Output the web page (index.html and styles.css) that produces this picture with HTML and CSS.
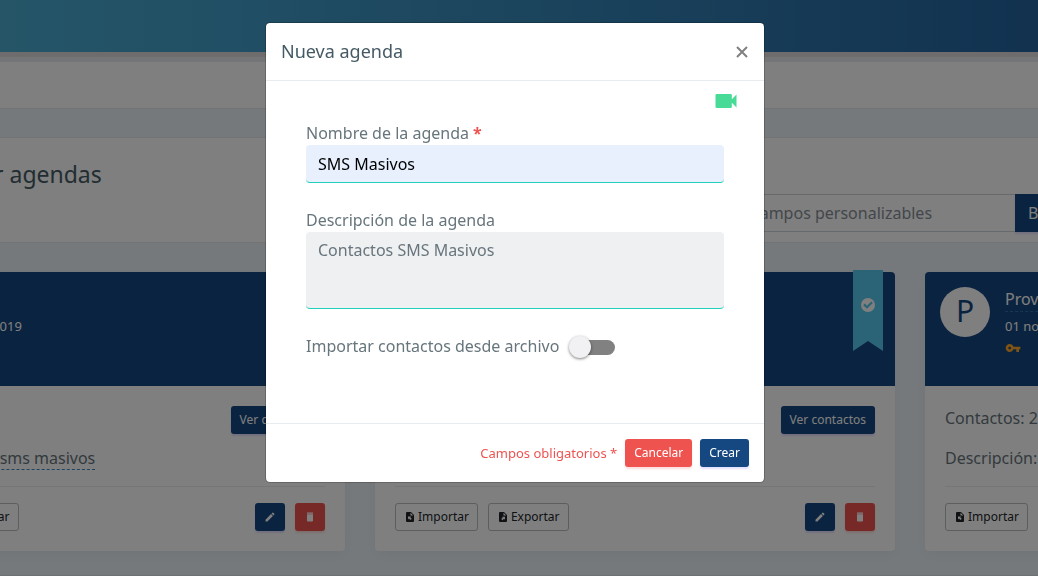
FILE: index.html
```html
<!DOCTYPE html>
<html lang="es">
<head>
<meta charset="utf-8">
<title>Nueva agenda</title>
<link rel="stylesheet" href="styles.css">
</head>
<body>
<svg class="sprite" aria-hidden="true">
  <symbol id="i-video" viewBox="0 0 24 24"><path d="M17 10.500V7a1 1 0 0 0-1-1H4a1 1 0 0 0-1 1v10a1 1 0 0 0 1 1h12a1 1 0 0 0 1-1v-3.500l4 4v-11z"/></symbol>
  <symbol id="i-key" viewBox="0 0 24 24"><path d="M12.650 10C11.830 7.670 9.610 6 7 6c-3.310 0-6 2.690-6 6s2.690 6 6 6c2.610 0 4.830-1.670 5.650-4H17v4h4v-4h2v-4zM7 14c-1.100 0-2-.9-2-2s.9-2 2-2 2 .9 2 2-.9 2-2 2z"/></symbol>
  <symbol id="i-check" viewBox="2 2 20 20"><path fill-rule="evenodd" d="M12 2a10 10 0 1 0 0 20 10 10 0 0 0 0-20zM10.500 17.500 5.200 12.200l2.200-2.200 3.100 3.100 6.200-6.200 2.200 2.200z"/></symbol>
  <symbol id="i-pencil" viewBox="0 0 24 24"><path d="M20.710 7.040c.39-.39.39-1.040 0-1.410l-2.340-2.340c-.37-.39-1.020-.39-1.410 0l-1.840 1.830 3.750 3.750M3 17.250V21h3.750L17.810 9.930l-3.750-3.750z"/></symbol>
  <symbol id="i-trash" viewBox="0 0 24 24"><path d="M18 3H6v2.500h12M6 19a2 2 0 0 0 2 2h8a2 2 0 0 0 2-2V6.500H6z"/></symbol>
  <symbol id="i-import" viewBox="0 0 24 24"><path fill-rule="evenodd" d="M14 2H6a2 2 0 0 0-2 2v16a2 2 0 0 0 2 2h12a2 2 0 0 0 2-2V8zM13 9V3.500L18.500 9zM8 11v6l2-2 3 3 2.500-2.500-3-3L14.500 11z"/></symbol>
  <symbol id="i-export" viewBox="0 0 24 24"><path fill-rule="evenodd" d="M14 2H6a2 2 0 0 0-2 2v16a2 2 0 0 0 2 2h12a2 2 0 0 0 2-2V8zM13 9V3.500L18.500 9zM10 11.500h6v6l-2-2-3 3L8.500 16l3-3z"/></symbol>
</svg>

<div class="page">
  <header class="topbar"></header>
  <nav class="breadcrumb"></nav>

  <section class="toolbar">
    <h1 class="toolbar-title">r agendas</h1>
    <form class="search">
      <input class="search-input" type="search" placeholder="campos personalizables" aria-label="Buscar agendas">
      <button class="search-button" type="button">Buscar</button>
    </form>
  </section>

  <main class="cards">
    <article class="card">
      <div class="card-head">
        <div class="avatar">P</div>
        <div class="card-info">
          <a class="card-name" href="#">Prueba</a>
          <time class="card-date">01 noviembre 2019</time>
        </div>
      </div>
      <div class="card-body">
        <div class="card-row"><span>Contactos: 2</span><button class="btn btn-primary" type="button">Ver contactos</button></div>
        <p class="card-desc">Descripción: <a class="editable" href="#">Prueba sms masivos</a></p>
        <div class="card-actions">
          <button class="btn btn-outline" type="button"><svg class="icon-sm"><use href="#i-import"/></svg>Importar</button>
          <button class="btn btn-outline" type="button"><svg class="icon-sm"><use href="#i-export"/></svg>Exportar</button>
          <button class="btn btn-primary btn-icon push" type="button" aria-label="Editar"><svg class="icon-sm"><use href="#i-pencil"/></svg></button>
          <button class="btn btn-danger btn-icon" type="button" aria-label="Eliminar"><svg class="icon-sm"><use href="#i-trash"/></svg></button>
        </div>
      </div>
    </article>

    <article class="card">
      <div class="card-head">
        <div class="ribbon"><svg class="icon-check"><use href="#i-check"/></svg></div>
      </div>
      <div class="card-body">
        <div class="card-row"><span>Contactos: 2</span><button class="btn btn-primary" type="button">Ver contactos</button></div>
        <p class="card-desc">Descripción:</p>
        <div class="card-actions">
          <button class="btn btn-outline" type="button"><svg class="icon-sm"><use href="#i-import"/></svg>Importar</button>
          <button class="btn btn-outline" type="button"><svg class="icon-sm"><use href="#i-export"/></svg>Exportar</button>
          <button class="btn btn-primary btn-icon push" type="button" aria-label="Editar"><svg class="icon-sm"><use href="#i-pencil"/></svg></button>
          <button class="btn btn-danger btn-icon" type="button" aria-label="Eliminar"><svg class="icon-sm"><use href="#i-trash"/></svg></button>
        </div>
      </div>
    </article>

    <article class="card">
      <div class="card-head">
        <div class="avatar">P</div>
        <div class="card-info">
          <a class="card-name" href="#">Proveedores</a>
          <time class="card-date">01 noviembre 2019</time>
          <svg class="icon-key"><use href="#i-key"/></svg>
        </div>
      </div>
      <div class="card-body">
        <div class="card-row"><span>Contactos: 2</span></div>
        <p class="card-desc">Descripción:</p>
        <div class="card-actions">
          <button class="btn btn-outline" type="button"><svg class="icon-sm"><use href="#i-import"/></svg>Importar</button>
        </div>
      </div>
    </article>
  </main>
  <footer class="page-foot"></footer>
</div>

<div class="backdrop">
  <form class="modal" role="dialog" aria-modal="true" aria-labelledby="modal-title">
    <div class="modal-head">
      <h2 class="modal-title" id="modal-title">Nueva agenda</h2>
      <button class="close" type="button" aria-label="Cerrar"><svg class="icon-close" viewBox="0 0 12 12"><path d="M1 1l10 10M11 1L1 11"/></svg></button>
    </div>
    <div class="modal-body">
      <a class="video" href="#" aria-label="Ver video"><svg class="icon-video"><use href="#i-video"/></svg></a>
      <div class="fields">
        <div class="field">
          <label class="label" for="name">Nombre de la agenda <span class="required">*</span></label>
          <input class="control control-filled" id="name" type="text" value="SMS Masivos">
        </div>
        <div class="field">
          <label class="label" for="desc">Descripción de la agenda</label>
          <textarea class="control control-area" id="desc">Contactos SMS Masivos</textarea>
        </div>
        <div class="switch-row">
          <label class="label" for="import">Importar contactos desde archivo</label>
          <input class="switch" id="import" type="checkbox">
        </div>
      </div>
    </div>
    <div class="modal-foot">
      <span class="note">Campos obligatorios *</span>
      <button class="btn btn-danger" type="button">Cancelar</button>
      <button class="btn btn-primary" type="button">Crear</button>
    </div>
  </form>
</div>
</body>
</html>
```

FILE: styles.css
```css
* { box-sizing: border-box; }

body {
  margin: 0;
  font: 16px/24px "Noto Sans", "Open Sans", sans-serif;
  color: #67757c;
  background: #ebf3f8;
}

h1, h2, p { margin: 0; font-weight: 400; }
button, input, textarea { font: inherit; }
svg { display: block; fill: currentColor; }
.sprite { position: absolute; width: 0; height: 0; }

.page { height: 100vh; overflow: hidden; }

.topbar {
  height: 52px;
  background: linear-gradient(90deg, #4aabcf 0%, #43a0cb 20%, #2464a0 100%);
}

.breadcrumb {
  height: 57px;
  border-top: 5px solid #dcd8d8;
  border-bottom: 1px solid #e2e6e9;
  background: linear-gradient(#e6eaec 5px, #fff 5px);
}

.toolbar {
  display: flex;
  justify-content: space-between;
  height: 106px;
  margin: 28px 0 29px;
  border: solid #e2e6e9;
  border-width: 1px 0;
  background: #fff;
  overflow: hidden;
}
.toolbar-title {
  margin: 20px 0 0 -6px;
  font-size: 23px;
  line-height: 32px;
  color: #455a64;
}
.search { display: flex; margin: 56px -60px 0 0; height: 38px; }
.search-input {
  width: 276px;
  padding: 0 12px;
  border: 1px solid #ced4da;
  border-right: 0;
  background: #fff;
  outline: 0;
}
.search-input::placeholder { color: #868e96; opacity: 1; }
.search-button {
  width: 83px;
  padding: 0 13px;
  border: 0;
  background: #154780;
  color: #fff;
  text-align: left;
  box-shadow: 0 2px 2px rgba(116, 96, 238, .2);
}

.cards {
  display: grid;
  grid-template-columns: repeat(3, 520px);
  gap: 30px;
  margin-left: -175px;
}
.card {
  border-radius: 4px;
  background: #fff;
  box-shadow: 0 4px 12px rgba(120, 140, 160, .08);
}
.card-head {
  position: relative;
  display: flex;
  gap: 15px;
  height: 114px;
  padding: 15px;
  border-radius: 4px 4px 0 0;
  background: #154780;
  color: #fff;
}
.avatar {
  width: 50px;
  height: 50px;
  border-radius: 50%;
  background: #fff;
  color: #154780;
  font-size: 30px;
  line-height: 48px;
  text-align: center;
}
.card-info { display: flex; flex-direction: column; align-items: flex-start; padding-top: 1px; }
.card-name {
  border-bottom: 1px dashed #2f6fa8;
  color: #fff;
  line-height: 23px;
  text-decoration: none;
}
.card-date { margin-top: 4px; font-size: 13px; line-height: 20px; }
.icon-key { width: 16px; height: 16px; margin-top: 4px; color: #ffa726; }
.ribbon {
  position: absolute;
  top: -2px;
  right: 12px;
  width: 30px;
  height: 81px;
  padding: 28px 8px 0;
  background: #58c8ee;
  clip-path: polygon(0 0, 100% 0, 100% 100%, 50% 71px, 0 100%);
}
.icon-check { width: 14px; height: 14px; }

.card-body { padding: 20px; }
.card-row { display: flex; justify-content: space-between; height: 28px; }
.card-desc { margin: 12px 0 16px; }
.editable {
  border-bottom: 1px dashed #3a87c2;
  color: inherit;
  text-decoration: none;
}
.card-actions {
  display: flex;
  gap: 10px;
  padding-top: 16px;
  border-top: 1px solid #e9ecef;
}

.btn {
  display: inline-flex;
  align-items: center;
  justify-content: center;
  gap: 2px;
  height: 28px;
  padding: 0 9px;
  border: 0;
  border-radius: 3px;
  font-size: 12px;
  line-height: 18px;
  white-space: nowrap;
}
.btn-primary {
  background: #154780;
  color: #fff;
  box-shadow: 0 2px 2px rgba(116, 96, 238, .2);
}
.btn-danger {
  background: #ef5350;
  color: #fff;
  box-shadow: 0 2px 2px rgba(239, 83, 80, .2);
}
.btn-outline {
  padding: 0 8px;
  border: 1px solid #b8bcc0;
  background: #fff;
  color: #212529;
}
.btn-icon { width: 30px; padding: 0; }
.push { margin-left: auto; margin-right: 0; }
.icon-sm { width: 12px; height: 12px; }

.page-foot { margin-top: 24px; height: 40px; border-top: 1px solid #dde2e6; }

.backdrop {
  position: fixed;
  inset: 0;
  padding: 22px 8px 0 0;
  background: rgba(0, 0, 0, .5);
}
.modal {
  width: 500px;
  max-width: 100%;
  margin: 0 auto;
  border: 1px solid rgba(0, 0, 0, .2);
  border-radius: 5px;
  background: #fff;
  background-clip: padding-box;
}
.modal-head {
  display: flex;
  align-items: center;
  justify-content: space-between;
  padding: 15px;
  border-bottom: 1px solid #e9ecef;
}
.modal-title { font-size: 18px; line-height: 27px; color: #455a64; }
.close { padding: 0 1px; border: 0; background: none; color: #808080; }
.icon-close {
  width: 12px;
  height: 12px;
  fill: none;
  stroke: currentColor;
  stroke-width: 2;
}
.modal-body { padding: 6px 24px 65px 40px; }
.video { display: block; width: 28px; margin-left: auto; color: #48db98; }
.icon-video { width: 28px; height: 28px; }
.fields { padding: 6px 16px 0 0; }
.field { display: flex; flex-direction: column; margin-bottom: 25px; }
.label { line-height: 24px; }
.required { color: #ef5350; font-weight: 700; }
.control {
  height: 38px;
  padding: 6px 12px;
  border: 0;
  border-bottom: 1px solid #1fd1bd;
  border-radius: 4px;
  outline: 0;
  resize: none;
}
.control-filled { background: #e8f0fe; color: #000; }
.control-area { height: 77px; background: #eff0f2; color: #67757c; }
.switch-row { display: flex; align-items: center; gap: 10px; }
.switch {
  appearance: none;
  display: grid;
  align-items: center;
  width: 46px;
  height: 22px;
  margin: 2px 0 0;
}
.switch::before,
.switch::after { content: ""; grid-area: 1 / 1; }
.switch::before { height: 15px; margin-left: 8px; border-radius: 8px; background: #818181; }
.switch::after {
  width: 22px;
  height: 22px;
  border-radius: 50%;
  background: #f1f1f4;
  box-shadow: 0 1px 3px rgba(0, 0, 0, .5);
}
.modal-foot {
  display: flex;
  align-items: center;
  justify-content: flex-end;
  gap: 8px;
  padding: 15px;
  border-top: 1px solid #e9ecef;
}
.note { font-size: 13px; line-height: 20px; color: #ef5350; }
```
